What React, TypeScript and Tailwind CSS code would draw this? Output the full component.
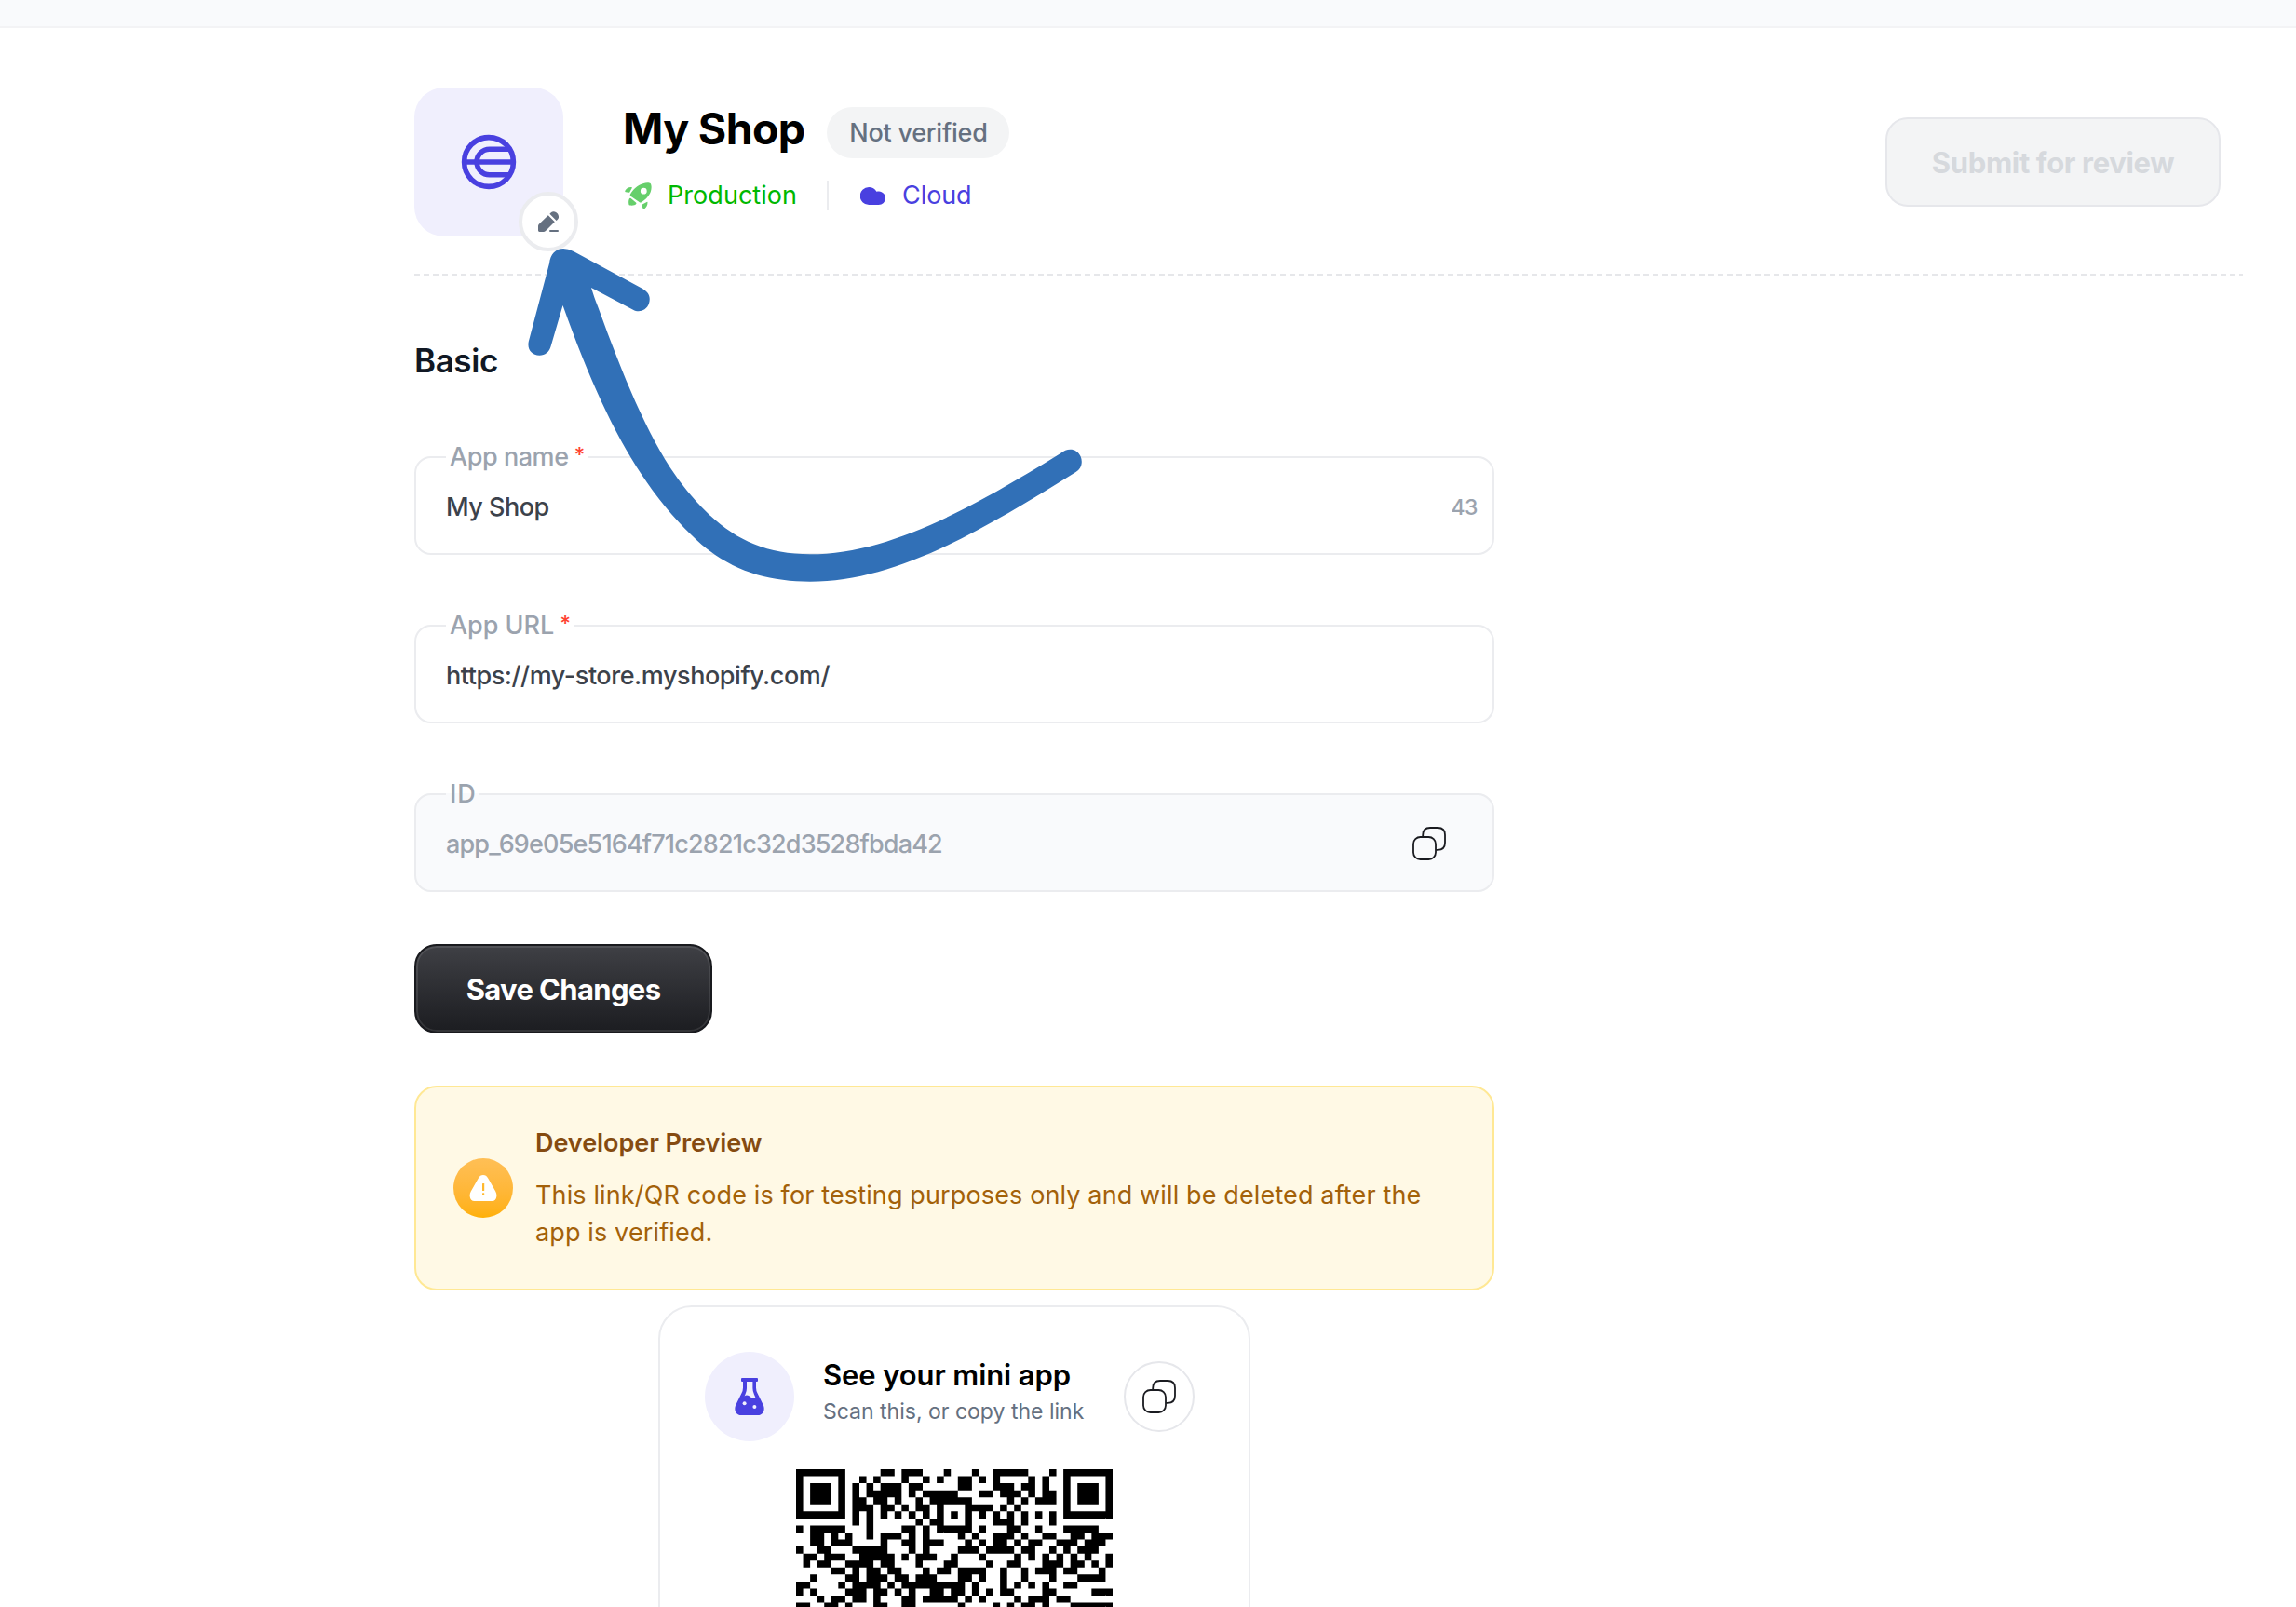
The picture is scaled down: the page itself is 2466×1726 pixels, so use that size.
import type { ReactNode } from "react";

const QR_SIZE = 45;
const MODULE = 340 / QR_SIZE;

// Dark module columns for each row of the code, top to bottom.
const FINDER_FULL_L = [0, 1, 2, 3, 4, 5, 6];
const FINDER_FULL_R = [38, 39, 40, 41, 42, 43, 44];
const FINDER_EDGE = [0, 6, 38, 44];
const FINDER_CORE = [0, 2, 3, 4, 6, 38, 40, 41, 42, 44];

const QR_ROWS: number[][] = [
  [...FINDER_FULL_L, 12, 13, 15, 16, 17, 21, 25, 28, 29, 30, 31, 32, 36, ...FINDER_FULL_R],
  [...FINDER_EDGE, 9, 11, 15, 18, 20, 23, 24, 26, 28, 33, 35],
  [...FINDER_CORE, 8, 10, 12, 13, 14, 16, 17, 23, 24, 28, 29, 30, 32, 33, 35],
  [...FINDER_CORE, 8, 10, 11, 12, 13, 14, 16, 18, 19, 20, 21, 22, 26, 27, 29, 30, 31, 33, 35, 36],
  [...FINDER_CORE, 8, 9, 11, 12, 14, 17, 19, 20, 21, 22, 23, 24, 30, 32, 34, 35, 36],
  [...FINDER_EDGE, 8, 9, 10, 12, 13, 15, 17, 18, 20, 24, 25, 26, 27, 29, 31],
  [...FINDER_FULL_L, 8, 10, 12, 14, 16, 18, 20, 22, 24, 26, 28, 30, 32, 34, 36, ...FINDER_FULL_R],
  [8, 10, 17, 19, 20, 24, 28, 29, 30, 32, 36],
  [0, 2, 3, 4, 5, 6, 10, 15, 16, 18, 20, 21, 22, 23, 24, 26, 30, 31, 34, 38, 39, 40, 41, 42],
  [2, 3, 5, 7, 10, 12, 13, 14, 16, 18, 23, 25, 28, 29, 30, 32, 35, 36, 39, 40, 42, 43, 44],
  [2, 3, 5, 6, 7, 12, 15, 16, 18, 19, 20, 24, 26, 28, 29, 31, 33, 34, 37, 38, 39, 41, 42, 43],
  [0, 3, 4, 8, 9, 10, 11, 12, 16, 18, 23, 24, 25, 27, 28, 29, 30, 32, 33, 36, 38, 40, 41, 42],
  [1, 2, 4, 5, 6, 9, 10, 11, 12, 13, 15, 17, 18, 19, 22, 26, 31, 33, 35, 37, 39, 41, 44],
  [1, 3, 4, 7, 8, 9, 10, 12, 13, 17, 21, 22, 27, 30, 31, 35, 36, 37, 39, 40, 42, 44],
  [5, 6, 8, 10, 11, 13, 14, 18, 20, 21, 23, 24, 25, 26, 29, 32, 34, 35, 36, 38, 39, 43],
  [2, 7, 8, 10, 11, 12, 14, 15, 17, 18, 19, 23, 24, 26, 29, 32, 36, 40, 41, 42, 43],
  [0, 1, 6, 8, 9, 10, 11, 13, 15, 16, 17, 18, 19, 20, 21, 22, 23, 25, 29, 31, 33, 35, 38, 39],
  [0, 2, 7, 8, 9, 11, 12, 14, 16, 19, 20, 22, 23, 25, 27, 29, 30, 35, 36, 42, 43, 44],
  [3, 5, 6, 8, 9, 11, 15, 16, 18, 19, 20, 21, 22, 24, 26, 31, 33, 34, 35, 37, 38],
  [0, 1, 4, 5, 7, 11, 12, 15, 16, 23, 28, 30, 32, 33, 35, 39, 40, 41, 42, 43, 44],
];

const QR_PATH = QR_ROWS.flatMap((cols, row) => cols.map((col) => `M${col} ${row}h1v1h-1z`)).join("");

function QrCode() {
  return (
    <svg width="340" height="340" viewBox="0 0 340 340" className="shrink-0">
      <path d={QR_PATH} transform={`scale(${MODULE})`} fill="#000" />
    </svg>
  );
}

function WorldLogo() {
  return (
    <svg width="60" height="60" viewBox="0 0 60 60" fill="none" stroke="#4940e0" strokeWidth="5.6">
      <circle cx="30" cy="30" r="26.4" />
      <path d="M3.6 30H56.4" />
      <path d="M52.5 16.3H30.8a13.7 13.7 0 0 0 0 27.4H52.5" />
    </svg>
  );
}

function PencilIcon() {
  return (
    <svg width="22" height="22" viewBox="0 0 22 22" fill="#657080">
      <path d="M0 20.6V15.8Q0 14.6 .9 13.7L10.8 4.3L17.8 11.3L8 21Q7 22 5.8 22H1.4Q0 22 0 20.6Z" />
      <path d="M12.4 2.8L13.6 1.6Q15 0.2 17 .3Q19.4 .6 20.9 2.5Q22.2 4.4 22 6.8Q21.8 8 20.9 8.8L19.6 9.9Z" />
      <rect x="12" y="20" width="10" height="2" rx="1" />
    </svg>
  );
}

function RocketIcon() {
  return (
    <svg width="29" height="29" viewBox="0 0 29 29" fill="#66cf6b">
      <path
        fillRule="evenodd"
        d="M27.6 1.1C28.9 2.6 29 6.5 27.8 10C26.4 14 22.6 18.3 17.8 21.2Q16.6 21.9 15.6 20.9L6.8 15Q5.2 14 6 12.6C8.6 7.4 13.6 3 19.5 1.2C22.6 .1 26.3 -.1 27.6 1.1ZM20.3 5.8A3.4 3.4 0 1 0 20.3 12.6A3.4 3.4 0 1 0 20.3 5.8Z"
      />
      <path d="M.4 8.8C1.8 6.2 4 4.8 7.2 5Q8.2 5.1 7.7 6L5.4 10.2Q5 11 4.1 10.8L1 10.3Q-.1 10 .4 8.8Z" />
      <path d="M4.9 17.6Q5.4 16.4 6.6 17L12 21.4Q12.8 22 12.4 22.8C11.2 24.6 8.4 25 5.4 24.6Q4.5 24.5 4.4 23.6C4 21 4.1 19.3 4.9 17.6Z" />
      <path d="M23.6 21Q24.6 20.4 24.5 21.6C24.4 24.6 23.2 27 21 28.5Q20 29.1 19.6 28L18.4 24.7Q18.1 23.9 18.9 23.5Z" />
    </svg>
  );
}

function CloudIcon() {
  return (
    <svg width="27" height="19" viewBox="0 0 27 19" fill="#4940e0">
      <path d="M9.2 0C12.8 0 15.9 1.8 17.4 4.7Q18.5 4.4 20 4.6C24 5 27 8 27 11.8C27 15.9 23.7 19 19.6 19H9.2A9.3 9.3 0 0 1 9.2 0Z" />
    </svg>
  );
}

function CopyIcon() {
  return (
    <svg width="36" height="36" viewBox="0 0 36 36" fill="none" stroke="#1a1b20" strokeWidth="1.8">
      <path d="M11.2 10.6V8.9Q11.2 1 19 1H27.3Q35 1 35 8.8V17Q35 24.8 27.2 24.8H25.2" />
      <rect x="1" y="11" width="24" height="24" rx="7.6" />
    </svg>
  );
}

function WarningIcon() {
  return (
    <svg width="30" height="28" viewBox="0 0 30 28">
      <path
        d="M15 0C17.3 0 18.9 1.2 20.2 3.4L28.2 17.6C29.3 19.6 29.6 21.4 29.3 23.2C28.9 26.2 27.3 28 24.4 28H5.6C2.7 28 1.1 26.2 .7 23.2C.4 21.4 .7 19.6 1.8 17.6L9.8 3.4C11.1 1.2 12.7 0 15 0Z"
        fill="#fff"
      />
      <rect x="14" y="9" width="2.2" height="8" rx=".6" fill="#ffb82e" />
      <rect x="14" y="19.2" width="2.2" height="2.6" rx=".6" fill="#ffb82e" />
    </svg>
  );
}

function FlaskIcon() {
  return (
    <svg width="32" height="40" viewBox="0 0 32 40">
      <path
        fillRule="evenodd"
        fill="#4940e0"
        d="M8 0H24Q25 0 25 1V3Q25 4 24 4H23V10.5Q23 13.6 24.6 16.4L31 29.6C33 34.4 30.4 40 25 40H7C1.6 40-1 34.4 1 29.6L7.4 16.4Q9 13.6 9 10.5V4H8Q7 4 7 3V1Q7 0 8 0ZM13 4V11Q13 14.6 11.4 17.8L10.6 19.4C13 17.6 15.4 19 17 20.4C18.6 21.7 20.6 21.9 22.4 21L21 17.8Q19.4 14.6 19.4 11V4Z"
      />
      <circle cx="10.6" cy="27.2" r="2" fill="#f0effd" />
      <circle cx="21.4" cy="31" r="2" fill="#f0effd" />
    </svg>
  );
}

function Arrow() {
  return (
    <svg
      className="pointer-events-none absolute left-[560px] top-[260px]"
      width="610"
      height="370"
      viewBox="560 260 610 370"
      fill="#3170b7"
    >
      <path d="M590 283C591 273 597 267 605 267Q610 267 616 270L690 310C697 314 699 319 697 326C694 334 686 336 680 332.7L635 309C637 315 639 322 642 329C675 420 705 490 743 533C778 574 815 595.3 870 595.3C955 595.3 1045 545 1139 487C1147 480 1157 482 1160.5 490C1163.5 497 1161 504 1155.5 507C1050 573 960 624.7 870 624.7C822 624.7 780 612 743 575C688 522 648 450 604.5 328L591.7 371.7C590 378 585.5 381.7 579.5 381.7C571 381.7 566 375 567.8 366.7Z" />
    </svg>
  );
}

function Field({
  label,
  required,
  labelClass,
  className,
  children,
}: {
  label: string;
  required?: boolean;
  labelClass: string;
  className: string;
  children: ReactNode;
}) {
  return (
    <fieldset className={`h-[122px] rounded-[18px] border-2 border-[#ebecef] pl-8 ${className}`}>
      <legend className="flex h-[34px] items-center px-1 text-[27px] leading-[34px] text-[#9ba3ae]">
        <span className={labelClass}>{label}</span>
        {required && (
          <span className="ml-[6px] h-10 text-[22px] font-semibold leading-[34px] text-[#ff4332]">
            *
          </span>
        )}
      </legend>
      <div className="flex h-[75px] items-center justify-between">{children}</div>
    </fieldset>
  );
}

export default function App() {
  return (
    <div className="relative h-[1726px] w-full overflow-hidden bg-white font-['Inter',sans-serif] font-medium">
      <div className="h-[30px] border-b-2 border-[#f3f3f5] bg-[#f9fafc]" />

      <main className="ml-[445px] w-[1965px] pt-16">
        <header className="flex h-40 items-center">
          <div className="relative flex size-40 shrink-0 items-center justify-center rounded-[32px] bg-[#f0effd]">
            <WorldLogo />
            <div className="absolute -bottom-4 -right-4 flex size-16 items-center justify-center rounded-full border-4 border-[#ebecef] bg-white">
              <PencilIcon />
            </div>
          </div>

          <div className="ml-16 mt-4 flex flex-col self-start">
            <div className="flex h-[66px] items-center">
              <h1 className="pb-[10px] text-[46.5px] font-bold leading-[56px] tracking-[-0.65px] text-black">
                My Shop
              </h1>
              <span className="mb-[2px] ml-6 flex h-[55px] w-[196px] items-center justify-center rounded-full bg-[#f3f4f5] text-[27px] leading-none tracking-[-0.25px] text-[#657080]">
                Not verified
              </span>
            </div>
            <div className="mt-[18px] flex h-8 items-center text-[27px] font-normal leading-8">
              <span className="ml-[2px]">
                <RocketIcon />
              </span>
              <span className="ml-[17px] tracking-[0.05px] text-[#00b800]">Production</span>
              <span className="ml-8 h-8 w-[2px] bg-[#ebecef]" />
              <span className="ml-[34px]">
                <CloudIcon />
              </span>
              <span className="ml-[18px] tracking-[-0.1px] text-[#4940e0]">Cloud</span>
            </div>
          </div>

          <button className="ml-auto mr-[25px] h-24 w-[360px] rounded-3xl border-2 border-[#e6e7eb] bg-[#f3f4f5] text-[31px] font-bold leading-none tracking-[-0.35px] text-[#d6d9dd]">
            Submit for review
          </button>
        </header>

        <div className="mt-10 h-[2px] w-[1964px] bg-[repeating-linear-gradient(90deg,#e6e7ea_0_6px,transparent_6px_10px)]" />

        <div className="w-[1160px]">
          <h2 className="mt-[69px] text-[35px] font-semibold leading-[44px] tracking-[-0.4px] text-[#111824]">
            Basic
          </h2>

          <form className="mt-[65px] flex flex-col gap-[59px]">
            <Field label="App name" required labelClass="tracking-[-0.45px]" className="pr-4">
              <span className="text-[27px] tracking-[-0.5px] text-[#3c424b]">My Shop</span>
              <span className="text-[23px] tracking-[-0.5px] text-[#9ba3ae]">43</span>
            </Field>
            <Field label="App URL" required labelClass="tracking-[-0.05px]" className="pr-4">
              <span className="text-[27px] tracking-[-0.45px] text-[#3c424b]">
                https://my-store.myshopify.com/
              </span>
            </Field>
            <Field label="ID" labelClass="tracking-[0.8px]" className="bg-[#f9fafc] pr-[50px]">
              <span className="text-[27px] tracking-[-0.83px] text-[#9ba3ae]">
                app_69e05e5164f71c2821c32d3528fbda42
              </span>
              <span className="mb-[3px]">
                <CopyIcon />
              </span>
            </Field>
          </form>

          <button className="mt-14 flex h-24 w-80 items-center justify-center rounded-3xl border-2 border-[#191a1e] bg-linear-to-b from-[#3f4045] to-[#1c1d21] text-[31px] font-bold leading-none tracking-[-0.65px] text-white shadow-[inset_0_0_0_2px_rgba(255,255,255,0.1)]">
            Save Changes
          </button>

          <section className="mt-14 flex h-[220px] items-center rounded-3xl border-2 border-[#ffe894] bg-[#fff9e5] pl-10">
            <div className="flex size-16 shrink-0 items-center justify-center rounded-full bg-linear-to-b from-[#ffbf55] to-[#ffb004]">
              <WarningIcon />
            </div>
            <div className="ml-6 mt-[2px] text-[27px]">
              <h3 className="font-semibold leading-9 tracking-[-0.05px] text-[#854b11]">
                Developer Preview
              </h3>
              <p className="mt-[18px] font-normal leading-10 tracking-[0.13px] text-[#a36109]">
                This link/QR code is for testing purposes only and will be deleted after the
                <br />
                app is verified.
              </p>
            </div>
          </section>

          <section className="mx-auto mt-4 flex h-[700px] w-[636px] flex-col items-center rounded-[36px] border-2 border-[#ebecef] pt-12">
            <div className="flex h-24 w-full items-center pl-12 pr-[58px]">
              <div className="flex size-24 shrink-0 items-center justify-center rounded-full bg-[#f0effd]">
                <FlaskIcon />
              </div>
              <div className="ml-[31px] pb-[11px]">
                <h3 className="text-[31px] font-semibold leading-10 tracking-[-0.1px] text-black">
                  See your mini app
                </h3>
                <p className="mt-[2px] text-[23px] font-normal leading-[34px] text-[#657080]">
                  Scan this, or copy the link
                </p>
              </div>
              <button className="ml-auto flex size-[76px] shrink-0 items-center justify-center rounded-full border-2 border-[#e6e7eb]">
                <CopyIcon />
              </button>
            </div>
            <div className="mt-[30px]">
              <QrCode />
            </div>
          </section>
        </div>
      </main>

      <Arrow />
    </div>
  );
}
